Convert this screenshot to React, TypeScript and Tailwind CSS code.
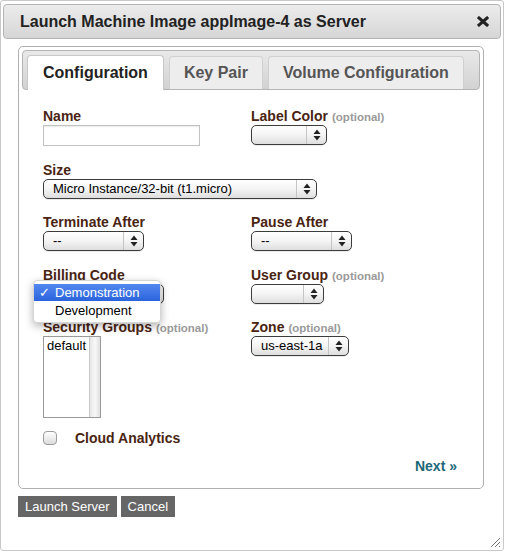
import type { ReactNode } from "react";

function Arrows() {
  return (
    <svg width="8" height="12" viewBox="0 0 8 12" className="block">
      <path d="M4 0.5 L7.5 5 L0.5 5 Z" fill="#222" />
      <path d="M4 11.5 L7.5 7 L0.5 7 Z" fill="#222" />
    </svg>
  );
}

function Select({ className, value }: { className: string; value?: string }) {
  return (
    <div
      className={`flex h-[20px] items-stretch rounded-[5px] border border-[#3c3c3c] bg-gradient-to-b from-white via-[#f4f4f4] to-[#dedede] text-[13px] leading-[18px] text-black shadow-[0_1px_0_rgba(0,0,0,0.08)] ${className}`}
    >
      <div className="flex-1 truncate pl-[9px]">{value}</div>
      <div className="flex w-[20px] items-center justify-center border-l border-[#c4c4c4]">
        <Arrows />
      </div>
    </div>
  );
}

function Label({ children, optional }: { children: ReactNode; optional?: boolean }) {
  return (
    <div className="h-[16px] text-[14px] font-bold leading-[16px] text-[#4a2412]">
      {children}
      {optional && <span className="ml-[4px] text-[11.5px] text-[#9a9a9a]">(optional)</span>}
    </div>
  );
}

export default function App() {
  return (
    <div className="h-[553px] w-[505px] bg-white" style={{ fontFamily: '"Liberation Sans", Arial, sans-serif' }}>
      <div className="relative flex h-[551px] w-[504px] flex-col rounded-[3px] border border-[#c8c8c8] bg-white">
        {/* title bar */}
        <div className="ml-[2px] mt-[3px] flex h-[35px] w-[498px] items-center justify-between rounded-[4px] border border-[#b4b4b4] bg-gradient-to-b from-[#ececec] to-[#d6d6d6] pl-[16px] pr-[11px]">
          <span className="text-[16px] font-bold text-[#222]">Launch Machine Image appImage-4 as Server</span>
          <svg width="12" height="11" viewBox="0 0 12 11">
            <path d="M2 2 L10 9 M10 2 L2 9" stroke="#222" strokeWidth="3" strokeLinecap="square" />
          </svg>
        </div>

        {/* tabs panel */}
        <div className="ml-[17px] mt-[7px] w-[466px] rounded-[5px] border border-[#b0b0b0] p-[3px]">
          <div className="flex h-[40px] items-end gap-[5px] rounded-[4px] border border-[#b4b4b4] bg-gradient-to-b from-[#e9e9e9] to-[#d2d2d2] px-[4px]">
            <div className="relative z-10 -mb-[1px] flex h-[35px] items-center rounded-t-[4px] border border-b-0 border-[#c8c8c8] bg-white px-[15px] text-[16px] font-bold text-[#222]">
              Configuration
            </div>
            <div className="flex h-[33px] items-center rounded-t-[4px] border border-b-0 border-[#d0d0d0] bg-[#ededed] px-[14px] text-[16px] font-bold text-[#555]">
              Key Pair
            </div>
            <div className="flex h-[33px] items-center rounded-t-[4px] border border-b-0 border-[#d0d0d0] bg-[#ededed] px-[14px] text-[16px] font-bold text-[#555]">
              Volume Configuration
            </div>
          </div>

          <div className="relative px-[21px] pb-[11px] pt-[18px]">
            <div className="grid grid-cols-[208px_1fr] gap-y-[15.5px]">
              <div>
                <Label>Name</Label>
                <div className="mt-[1px] h-[21px] w-[157px] border border-[#c2c2c2] bg-white shadow-[inset_0_1px_1px_rgba(0,0,0,0.08)]" />
              </div>
              <div>
                <Label optional>Label Color</Label>
                <Select className="mt-[1px] w-[76px]" />
              </div>

              <div className="col-span-2">
                <Label>Size</Label>
                <Select className="mt-[1px] w-[274px]" value="Micro Instance/32-bit (t1.micro)" />
              </div>

              <div>
                <Label>Terminate After</Label>
                <Select className="mt-[1px] w-[101px]" value="--" />
              </div>
              <div>
                <Label>Pause After</Label>
                <Select className="mt-[1px] w-[101px]" value="--" />
              </div>

              <div className="relative">
                <Label>Billing Code</Label>
                <Select className="mt-[1px] w-[121px]" />
                <div className="absolute left-[-10px] top-[13px] z-20 w-[128px] rounded-[4px] border border-[#d6d6d6] bg-white py-[3px] text-[13px] leading-[17px] text-black shadow-[0_3px_8px_rgba(0,0,0,0.3)]">
                  <div className="flex bg-gradient-to-b from-[#5488f0] to-[#2a63dc] text-white">
                    <span className="w-[21px] pl-[5px]">✓</span>
                    <span>Demonstration</span>
                  </div>
                  <div className="flex pt-[1px]">
                    <span className="w-[21px]" />
                    <span>Development</span>
                  </div>
                </div>
              </div>
              <div>
                <Label optional>User Group</Label>
                <Select className="mt-[1px] w-[73px]" />
              </div>

              <div>
                <Label optional>Security Groups</Label>
                <div className="mt-[1px] flex h-[82px] w-[58px] border border-[#9a9a9a] bg-white">
                  <div className="flex-1 pl-[3px] pt-[1px] text-[13px] leading-[16px] text-black">default</div>
                  <div className="w-[11px] border-l border-[#c8c8c8] bg-gradient-to-r from-[#e6e6e6] via-[#f8f8f8] to-[#e0e0e0]" />
                </div>
              </div>
              <div>
                <Label optional>Zone</Label>
                <Select className="mt-[1px] w-[98px]" value="us-east-1a" />
              </div>
            </div>

            <div className="mt-[12px] flex h-[16px] items-center">
              <div className="h-[14px] w-[14px] rounded-[4px] border border-[#9c9c9c] bg-gradient-to-b from-white to-[#dcdcdc]" />
              <span className="ml-[18px] text-[14px] font-bold leading-[16px] text-[#4a2412]">Cloud Analytics</span>
            </div>

            <div className="mt-[12px] flex justify-end pr-[2px]">
              <span className="text-[14px] font-bold leading-[16px] text-[#1c6878]">Next »</span>
            </div>
          </div>
        </div>

        {/* buttons */}
        <div className="ml-[17px] mt-[7px] flex gap-[4px]">
          <button className="h-[21px] bg-[#666] px-[7px] text-[13px] leading-[21px] text-white">Launch Server</button>
          <button className="h-[21px] bg-[#666] px-[7px] text-[13px] leading-[21px] text-white">Cancel</button>
        </div>

        {/* resize grip */}
        <svg width="12" height="12" viewBox="0 0 12 12" className="absolute bottom-[2px] right-[2px]">
          <path d="M11 2 L2 11 M11 6 L6 11 M11 10 L10 11" stroke="#777" strokeWidth="1" />
        </svg>
      </div>
    </div>
  );
}
